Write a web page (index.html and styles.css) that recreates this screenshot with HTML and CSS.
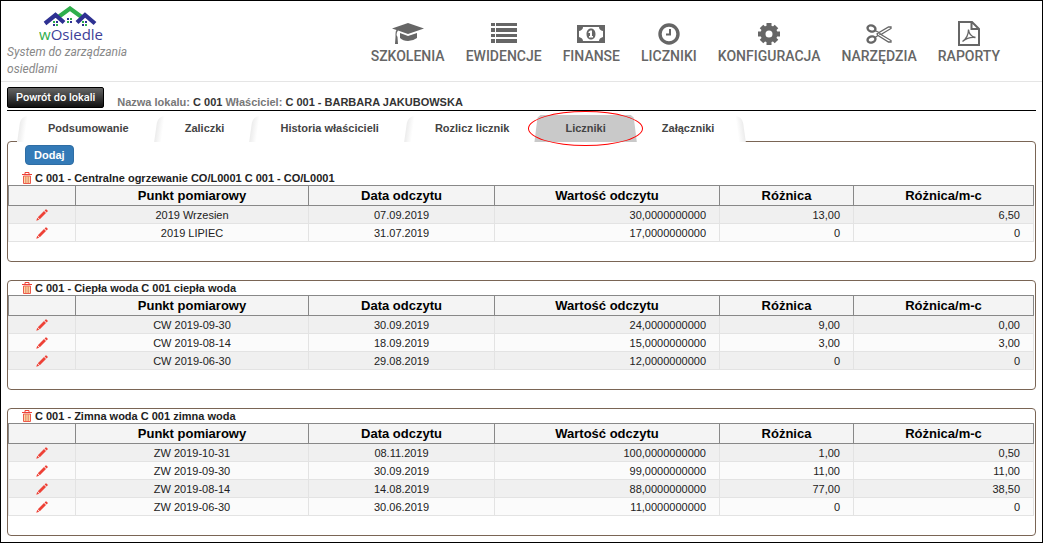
FILE: index.html
```html
<!DOCTYPE html>
<html lang="pl">
<head>
<meta charset="UTF-8" />
<meta name="viewport" content="width=device-width, initial-scale=1.0"/>
<title>wOsiedle - Liczniki</title>
<link rel="stylesheet" href="styles.css">
</head>
<body>

<svg class="defs" aria-hidden="true">
  <symbol id="pencil" viewBox="0 0 12 12">
    <path d="M0.3 11.7L1.2 8.8L3.2 10.8ZM1.8 8.2L8 2L10 4L3.8 10.2ZM8.6 1.4L9.6 0.4Q10 0 10.4 0.4L11.6 1.6Q12 2 11.6 2.4L10.6 3.4Z" fill="#ee4136"/>
  </symbol>
  <symbol id="trash" viewBox="0 0 10 12">
    <path d="M0 2.5H10M3 2V0.5H7V2" fill="none" stroke="#ee4136"/>
    <path d="M1.5 4V11.5H8.5V4Z" fill="#fbd9a8" stroke="#ee5a4a"/>
    <path d="M3.5 4V11M5 4V11M6.5 4V11" stroke="#e98a6a" stroke-width="0.8"/>
  </symbol>
</svg>

<header class="header">
  <a class="brand" href="#">
    <svg class="logo" width="66" height="38" viewBox="0 0 66 38" role="img" aria-label="wOsiedle">
      <path d="M18 12L31 2.500L44 12" fill="none" stroke="#2fae4c" stroke-width="4.200"/>
      <path d="M6 17.500L16.500 9L25 16.500M38 16.500L46 9L56 17.500" fill="none" stroke="#2e3192" stroke-width="4.200"/>
      <path d="M14 15h2v2h-2zM17 18h2v2h-2zM31 12h2v2h-2zM28 15h2v2h-2zM43 15h2v2h-2zM46 18h2v2h-2z" fill="#2fae4c"/>
      <path d="M17 15h2v2h-2zM14 18h2v2h-2zM28 12h2v2h-2zM31 15h2v2h-2zM46 15h2v2h-2zM43 18h2v2h-2z" fill="#2e3192"/>
      <text x="0" y="34" class="logo-text"><tspan fill="#2fae4c">w</tspan><tspan fill="#3d3f98">Osiedle</tspan></text>
    </svg>
    <span class="tagline">System do zarządzania osiedlami</span>
  </a>
  <nav class="nav">
    <a href="#">
      <svg width="32" height="26" viewBox="0 0 32 26"><path d="M16 3L32 8.500L16 14L6 10.500Q4.500 12 4.500 15L5.500 17L6 24H3L3.500 17L3.500 14Q3.500 11 4.500 10L0 8.500ZM8 13L16 16L25 13V18Q21 21 16 21Q11 21 8 18Z"/></svg>
      <span>SZKOLENIA</span>
    </a>
    <a href="#">
      <svg width="26" height="26" viewBox="0 0 26 26"><path d="M0 3h4v3H0zM5 3h21v3H5zM0 8h4v4H0zM5 8h21v4H5zM0 14h4v3H0zM5 14h21v3H5zM0 19h4v4H0zM5 19h21v4H5z"/></svg>
      <span>EWIDENCJE</span>
    </a>
    <a href="#">
      <svg width="28" height="26" viewBox="0 0 28 26"><path fill-rule="evenodd" d="M0 5H28V23H0ZM6 7Q6 10 2 11V17Q6 18 6 21H22Q22 18 26 17V11Q22 10 22 7Z"/><path fill-rule="evenodd" d="M14 8.500C17 8.500 18.500 11 18.500 14C18.500 17 17 19.500 14 19.500C11 19.500 9.500 17 9.500 14C9.500 11 11 8.500 14 8.500ZM13.200 10.500L11.500 12V13H13V16H12V17.500H16V16H15V10.500Z"/></svg>
      <span>FINANSE</span>
    </a>
    <a href="#">
      <svg width="22" height="26" viewBox="0 0 22 26"><circle cx="11" cy="14" r="9" fill="none" stroke="#666" stroke-width="3.400"/><path d="M11 9H13V15.500H8V13.500H11Z"/></svg>
      <span>LICZNIKI</span>
    </a>
    <a href="#">
      <svg width="22" height="26" viewBox="0 0 22 26"><circle cx="11" cy="14" r="6" fill="none" stroke="#666" stroke-width="5"/><g stroke="#666" stroke-width="5"><path d="M11 3V7M11 21V25M0 14H4M18 14H22M3.500 6.500L6 9M16 19L18.500 21.500M3.500 21.500L6 19M16 9L18.500 6.500"/></g></svg>
      <span>KONFIGURACJA</span>
    </a>
    <a href="#">
      <svg width="26" height="26" viewBox="0 0 26 26" fill="none" stroke="#666"><ellipse cx="5.500" cy="8.500" rx="4" ry="3" stroke-width="2.400" transform="rotate(20 5.500 8.500)"/><ellipse cx="5.500" cy="19.500" rx="4" ry="3" stroke-width="2.400" transform="rotate(-20 5.500 19.500)"/><path d="M9 10.500L13 12.500L22.500 7H25V8.500L15 14.500L25 20.500V22H22.500L12 15.500L9 17.500M13 12.500L11 14L12 15.500" stroke-width="1.300"/><circle cx="14" cy="14" r="0.700"/></svg>
      <span>NARZĘDZIA</span>
    </a>
    <a href="#">
      <svg width="22" height="26" viewBox="0 0 22 26" fill="none" stroke="#666"><path d="M1 2H14L21 9V25H1ZM13.500 2V9H21" stroke-width="2"/><path d="M4.500 21.500Q10.500 17 10.500 9.500Q11 16 17.500 17.500Q10.500 16.500 4.500 21.500Z" stroke-width="1.300"/></svg>
      <span>RAPORTY</span>
    </a>
  </nav>
</header>

<main class="main">
  <div class="unit-bar">
    <button class="back-btn" type="button">Powrót do lokali</button>
    <p class="unit-info">Nazwa lokalu: <b>C 001</b> Właściciel: <b>C 001 - BARBARA JAKUBOWSKA</b></p>
  </div>

  <nav class="tabs">
    <a class="tab" href="#">Podsumowanie</a>
    <a class="tab" href="#">Zaliczki</a>
    <a class="tab" href="#">Historia właścicieli</a>
    <a class="tab" href="#">Rozlicz licznik</a>
    <a class="tab active" href="#"><span>Liczniki</span></a>
    <a class="tab" href="#">Załączniki</a>
  </nav>

  <section class="panel first">
    <button class="add-btn" type="button">Dodaj</button>
    <h2 class="meter"><button class="icon-btn" type="button" aria-label="Usuń"><svg width="10" height="12"><use href="#trash"/></svg></button>C 001 - Centralne ogrzewanie CO/L0001 C 001 - CO/L0001</h2>
    <table class="readings">
      <thead>
        <tr><th class="col-edit"></th><th class="col-point">Punkt pomiarowy</th><th class="col-date">Data odczytu</th><th class="col-value">Wartość odczytu</th><th class="col-diff">Różnica</th><th>Różnica/m-c</th></tr>
      </thead>
      <tbody>
        <tr><td><button class="icon-btn" type="button" aria-label="Edytuj"><svg width="12" height="12"><use href="#pencil"/></svg></button></td><td>2019 Wrzesien</td><td>07.09.2019</td><td class="num">30,0000000000</td><td class="num">13,00</td><td class="num">6,50</td></tr>
        <tr><td><button class="icon-btn" type="button" aria-label="Edytuj"><svg width="12" height="12"><use href="#pencil"/></svg></button></td><td>2019 LIPIEC</td><td>31.07.2019</td><td class="num">17,0000000000</td><td class="num">0</td><td class="num">0</td></tr>
      </tbody>
    </table>
  </section>

  <section class="panel">
    <h2 class="meter"><button class="icon-btn" type="button" aria-label="Usuń"><svg width="10" height="12"><use href="#trash"/></svg></button>C 001 - Ciepła woda C 001 ciepła woda</h2>
    <table class="readings">
      <thead>
        <tr><th class="col-edit"></th><th class="col-point">Punkt pomiarowy</th><th class="col-date">Data odczytu</th><th class="col-value">Wartość odczytu</th><th class="col-diff">Różnica</th><th>Różnica/m-c</th></tr>
      </thead>
      <tbody>
        <tr><td><button class="icon-btn" type="button" aria-label="Edytuj"><svg width="12" height="12"><use href="#pencil"/></svg></button></td><td>CW 2019-09-30</td><td>30.09.2019</td><td class="num">24,0000000000</td><td class="num">9,00</td><td class="num">0,00</td></tr>
        <tr><td><button class="icon-btn" type="button" aria-label="Edytuj"><svg width="12" height="12"><use href="#pencil"/></svg></button></td><td>CW 2019-08-14</td><td>18.09.2019</td><td class="num">15,0000000000</td><td class="num">3,00</td><td class="num">3,00</td></tr>
        <tr><td><button class="icon-btn" type="button" aria-label="Edytuj"><svg width="12" height="12"><use href="#pencil"/></svg></button></td><td>CW 2019-06-30</td><td>29.08.2019</td><td class="num">12,0000000000</td><td class="num">0</td><td class="num">0</td></tr>
      </tbody>
    </table>
  </section>

  <section class="panel">
    <h2 class="meter"><button class="icon-btn" type="button" aria-label="Usuń"><svg width="10" height="12"><use href="#trash"/></svg></button>C 001 - Zimna woda C 001 zimna woda</h2>
    <table class="readings">
      <thead>
        <tr><th class="col-edit"></th><th class="col-point">Punkt pomiarowy</th><th class="col-date">Data odczytu</th><th class="col-value">Wartość odczytu</th><th class="col-diff">Różnica</th><th>Różnica/m-c</th></tr>
      </thead>
      <tbody>
        <tr><td><button class="icon-btn" type="button" aria-label="Edytuj"><svg width="12" height="12"><use href="#pencil"/></svg></button></td><td>ZW 2019-10-31</td><td>08.11.2019</td><td class="num">100,0000000000</td><td class="num">1,00</td><td class="num">0,50</td></tr>
        <tr><td><button class="icon-btn" type="button" aria-label="Edytuj"><svg width="12" height="12"><use href="#pencil"/></svg></button></td><td>ZW 2019-09-30</td><td>30.09.2019</td><td class="num">99,0000000000</td><td class="num">11,00</td><td class="num">11,00</td></tr>
        <tr><td><button class="icon-btn" type="button" aria-label="Edytuj"><svg width="12" height="12"><use href="#pencil"/></svg></button></td><td>ZW 2019-08-14</td><td>14.08.2019</td><td class="num">88,0000000000</td><td class="num">77,00</td><td class="num">38,50</td></tr>
        <tr><td><button class="icon-btn" type="button" aria-label="Edytuj"><svg width="12" height="12"><use href="#pencil"/></svg></button></td><td>ZW 2019-06-30</td><td>30.06.2019</td><td class="num">11,0000000000</td><td class="num">0</td><td class="num">0</td></tr>
      </tbody>
    </table>
  </section>
</main>

</body>
</html>
```
FILE: styles.css
```css
* {
  box-sizing: border-box;
}
body {
  margin: 0;
  min-height: 100vh;
  border: 1px solid #000;
  background-color: #fff;
  font-family: "Liberation Sans", Arial, sans-serif;
  font-size: 11px;
  color: #222;
}
a {
  color: inherit;
  text-decoration: none;
}
.defs {
  position: absolute;
  width: 0;
  height: 0;
}

/* header */
.header {
  display: flex;
  justify-content: space-between;
  padding: 5px 42px 3px 6px;
  border-bottom: 1px solid #e5e5e5;
  font-family: Roboto, sans-serif;
}
.brand {
  display: flex;
  flex-direction: column;
  width: 136px;
}
.logo {
  margin-left: 32px;
}
.logo-text {
  font-family: "Open Sans", sans-serif;
  font-size: 15px;
}
.tagline {
  font-size: 12px;
  line-height: 17px;
  font-style: italic;
  color: #888;
}
.nav {
  display: flex;
  gap: 21px;
  padding-top: 14px;
}
.nav a {
  display: flex;
  flex-direction: column;
  align-items: center;
  font-size: 14px;
  line-height: 20px;
  font-weight: 500;
  color: #666;
}
.nav svg {
  fill: #666;
}
.nav svg[fill="none"] {
  fill: none;
}

/* unit bar */
.main {
  padding: 5px 6px;
}
.unit-bar {
  display: flex;
  align-items: flex-start;
  gap: 13px;
  height: 24px;
  border-bottom: 1px solid #000;
}
.back-btn {
  height: 21px;
  padding: 0 8px;
  border: 1px solid #000;
  border-radius: 2px;
  background: linear-gradient(#666, #111);
  color: #fff;
  font: 500 11px Roboto, sans-serif;
}
.unit-info {
  margin: 8px 0 0;
  line-height: 14px;
  font-weight: bold;
  color: #777;
}
.unit-info b {
  color: #333;
}

/* tabs */
.tabs {
  display: flex;
  position: relative;
  z-index: 1;
  width: max-content;
  margin: 4px 0 0 10px;
  padding: 0 3px;
  background-color: #fff;
}
.tab {
  position: relative;
  padding: 0 28px;
  line-height: 27px;
  font-weight: bold;
  color: #444;
}
.tab::before,
.tab:last-child::after {
  content: "";
  position: absolute;
  top: 1px;
  bottom: 0;
  left: -1px;
  width: 7px;
  border-top-left-radius: 7px;
  background: linear-gradient(to right, #ececec, #fff);
  transform: skewX(-8deg);
}
.tab:last-child::after {
  left: auto;
  right: -2px;
  border-radius: 0 7px 0 0;
  background: linear-gradient(to left, #ececec, #fff);
  transform: skewX(8deg);
}
.tab.active {
  z-index: 1;
}
.tab.active span {
  position: relative;
}
.tab.active + .tab::before {
  display: none;
}
.tab.active::before {
  top: 0;
  left: -3px;
  right: -3px;
  width: auto;
  border-radius: 0;
  background: #c9c9c9;
  transform: none;
  clip-path: polygon(0 100%, 3px 10%, 6px 0, calc(100% - 6px) 0, calc(100% - 3px) 10%, 100% 100%);
}
.tab.active::after {
  content: "";
  position: absolute;
  top: -4px;
  bottom: -4px;
  left: -9px;
  right: -9px;
  border: 1px solid #f00;
  border-radius: 50%;
}

/* panels */
.panel {
  margin-top: 18px;
  padding: 0 1px 19px 0;
  border: 1px solid #7a6555;
  border-radius: 4px;
}
.panel.first {
  margin-top: -1px;
}
.add-btn {
  display: block;
  height: 20px;
  margin: 3px 0 6px 17px;
  padding: 0 8px;
  border: 1px solid #2e6da4;
  border-radius: 4px;
  background-color: #337ab7;
  color: #fff;
  font: bold 11px "Liberation Sans", Arial, sans-serif;
}
.meter {
  display: flex;
  align-items: center;
  gap: 3px;
  height: 14px;
  margin: 0 0 0 14px;
  font-size: 11px;
}
.icon-btn {
  display: block;
  margin: 0 auto;
  padding: 0;
  border: 0;
  background: none;
}
.meter .icon-btn {
  margin: 0;
}
.icon-btn svg {
  display: block;
}

/* readings */
.readings {
  width: 100%;
  table-layout: fixed;
  border-collapse: collapse;
  line-height: 14px;
}
.readings th {
  height: 20px;
  padding: 0;
  border: 1px solid #888;
  background-color: #f4f4f4;
  font-size: 13px;
  color: #000;
}
.readings td {
  height: 18px;
  padding: 0;
  border: 1px solid #e3e3e3;
  background-color: #fbfbfb;
  text-align: center;
}
.readings tbody tr:nth-child(odd) td {
  background-color: #f0f0f0;
}
.readings td.num {
  padding-right: 13px;
  text-align: right;
}
.col-edit {
  width: 67px;
}
.col-point {
  width: 233px;
}
.col-date {
  width: 186px;
}
.col-value {
  width: 225px;
}
.col-diff {
  width: 134px;
}
```
